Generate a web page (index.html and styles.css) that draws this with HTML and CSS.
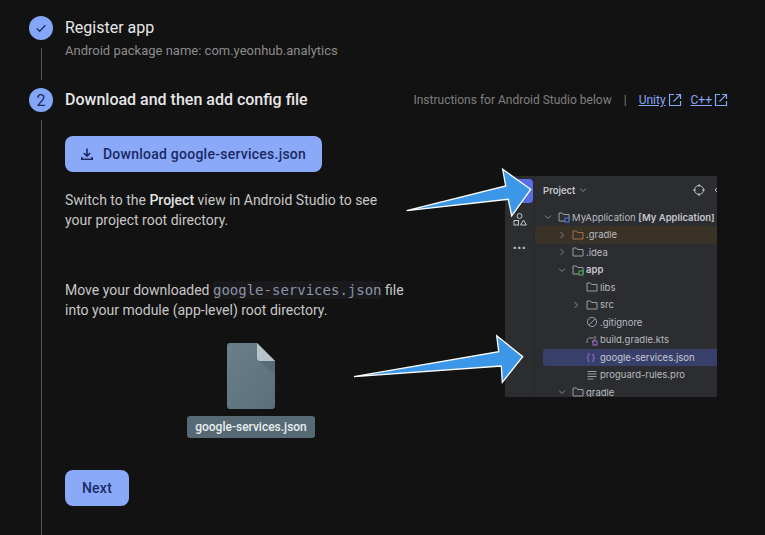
FILE: index.html
```html
<!DOCTYPE html>
<html lang="en">
<head>
<meta charset="utf-8">
<title>Add Firebase to your Android app</title>
<link rel="stylesheet" href="styles.css">
</head>
<body>
<main class="stepper">
  <section class="step step-done">
    <div class="rail">
      <div class="badge">
        <svg width="14" height="14" viewBox="0 0 14 14"><path class="check" d="M2.6 7.4 5.6 10.3 11.4 4.3"/></svg>
      </div>
      <div class="rail-line"></div>
    </div>
    <div class="step-main">
      <h2 class="step-title step-title-plain">Register app</h2>
      <p class="step-sub">Android package name: com.yeonhub.analytics</p>
    </div>
  </section>

  <section class="step step-active">
    <div class="rail">
      <div class="badge badge-num">2</div>
      <div class="rail-line"></div>
    </div>
    <div class="step-main">
      <header class="step-head">
        <h2 class="step-title">Download and then add config file</h2>
        <div class="alt-links">
          <span>Instructions for Android Studio below</span>
          <span class="sep">|</span>
          <a class="ext" href="#">Unity</a>
          <svg class="ext-icon" width="14" height="14" viewBox="0 0 14 14"><path d="M6 1.500H1.500v11h11V8M8 1.500h4.500V6M12.300 1.700 5.500 8.500"/></svg>
          <a class="ext ext-next" href="#">C++</a>
          <svg class="ext-icon" width="14" height="14" viewBox="0 0 14 14"><path d="M6 1.500H1.500v11h11V8M8 1.500h4.500V6M12.300 1.700 5.500 8.500"/></svg>
        </div>
      </header>

      <div class="step-body">
        <div class="instructions">
          <button class="btn btn-download" type="button">
            <svg width="16" height="16" viewBox="0 0 16 16"><path class="dl" d="M8 2.500V10M4.800 7 8 10.200 11.200 7M2.800 11v2.200h10.400V11"/></svg>
            Download google-services.json
          </button>
          <p class="para para-first">Switch to the <b>Project</b> view in Android Studio to see your project root directory.</p>
          <p class="para para-second">Move your downloaded <code>google-services.json</code> file into your module (app-level) root directory.</p>
          <div class="file">
            <svg width="48" height="66" viewBox="0 0 48 66">
              <defs>
                <linearGradient id="fileFill" x1="0" y1="0" x2="1" y2="1">
                  <stop offset="0" stop-color="#6a7f8b"/>
                  <stop offset="1" stop-color="#596f7c"/>
                </linearGradient>
              </defs>
              <path fill="url(#fileFill)" d="M3 0H30L48 18V63a3 3 0 0 1-3 3H3a3 3 0 0 1-3-3V3a3 3 0 0 1 3-3Z"/>
              <path fill="#566b77" d="M32 18H48V32Z"/>
              <path fill="#b8c4cc" d="M30 0 48 18H33a3 3 0 0 1-3-3Z"/>
            </svg>
            <div class="file-name">google-services.json</div>
          </div>
          <button class="btn btn-next" type="button">Next</button>
        </div>

        <figure class="ide">
          <div class="ide-rail">
            <div class="ide-app"></div>
            <svg class="ide-shapes" width="14" height="14" viewBox="0 0 14 14"><circle cx="6.500" cy="4" r="2.500"/><rect x="1" y="8.500" width="4.500" height="4.500"/><path d="M10.500 8 13.400 13H7.600Z"/></svg>
            <div class="ide-dots">•••</div>
          </div>
          <div class="ide-panel">
            <div class="ide-head">
              <span class="ide-head-title">Project</span>
              <svg class="chev" width="8" height="8" viewBox="0 0 8 8"><path d="M1 2.500 4 5.500 7 2.500"/></svg>
              <svg class="ide-target" width="12" height="12" viewBox="0 0 12 12"><circle cx="6" cy="6" r="4.500"/><path d="M6 0v3M6 9v3M0 6h3M9 6h3"/></svg>
              <svg class="chev chev-bright" width="8" height="8" viewBox="0 0 8 8"><path d="M6 1 3 4 6 7"/></svg>
            </div>
            <ul class="tree">
              <li class="row d0"><svg class="chev" width="10" height="10" viewBox="0 0 10 10"><path d="M2 3.500 5 6.500 8 3.500"/></svg><svg class="folder" width="12" height="12" viewBox="0 0 12 12"><path d="M1 2h3.500l1 1.500H11V10H1Z"/><rect class="mod-blue" x="7" y="7" width="4" height="4"/></svg><span>MyApplication <b>[My Application]</b></span></li>
              <li class="row d1 row-ignored"><svg class="chev" width="10" height="10" viewBox="0 0 10 10"><path d="M3.500 2 6.500 5 3.500 8"/></svg><svg class="folder folder-orange" width="12" height="12" viewBox="0 0 12 12"><path d="M1 2h3.500l1 1.500H11V10H1Z"/></svg><span>.gradle</span></li>
              <li class="row d1"><svg class="chev" width="10" height="10" viewBox="0 0 10 10"><path d="M3.500 2 6.500 5 3.500 8"/></svg><svg class="folder" width="12" height="12" viewBox="0 0 12 12"><path d="M1 2h3.500l1 1.500H11V10H1Z"/></svg><span>.idea</span></li>
              <li class="row d1"><svg class="chev" width="10" height="10" viewBox="0 0 10 10"><path d="M2 3.500 5 6.500 8 3.500"/></svg><svg class="folder" width="12" height="12" viewBox="0 0 12 12"><path d="M1 2h3.500l1 1.500H11V10H1Z"/><rect class="mod-green" x="7" y="7" width="4" height="4"/></svg><b>app</b></li>
              <li class="row d2"><span class="chev-gap"></span><svg class="folder" width="12" height="12" viewBox="0 0 12 12"><path d="M1 2h3.500l1 1.500H11V10H1Z"/></svg><span>libs</span></li>
              <li class="row d2"><svg class="chev" width="10" height="10" viewBox="0 0 10 10"><path d="M3.500 2 6.500 5 3.500 8"/></svg><svg class="folder" width="12" height="12" viewBox="0 0 12 12"><path d="M1 2h3.500l1 1.500H11V10H1Z"/></svg><span>src</span></li>
              <li class="row d2"><span class="chev-gap"></span><svg class="folder" width="12" height="12" viewBox="0 0 12 12"><circle cx="6" cy="6" r="4.600"/><path d="M2.800 9.200 9.200 2.800"/></svg><span>.gitignore</span></li>
              <li class="row d2"><span class="chev-gap"></span><svg class="folder" width="12" height="12" viewBox="0 0 12 12"><path d="M1 9V6.500C1 4.500 3 3.500 5 4c1.500.4 3 0 4-1.500 1 .8 1 2 0 3L7 7v2"/><rect class="mod-purple" x="7" y="7" width="4" height="4"/></svg><span>build.gradle.kts</span></li>
              <li class="row row-selected"><span class="chev-gap"></span><span class="json-icon">{}</span><span>google-services.json</span></li>
              <li class="row d2"><span class="chev-gap"></span><svg class="folder" width="12" height="12" viewBox="0 0 12 12"><path d="M1.500 2.500h9M1.500 5h9M1.500 7.500h9M1.500 10h6"/></svg><span>proguard-rules.pro</span></li>
              <li class="row d1"><svg class="chev" width="10" height="10" viewBox="0 0 10 10"><path d="M2 3.500 5 6.500 8 3.500"/></svg><svg class="folder" width="12" height="12" viewBox="0 0 12 12"><path d="M1 2h3.500l1 1.500H11V10H1Z"/></svg><span>gradle</span></li>
            </ul>
          </div>
        </figure>
      </div>
    </div>
  </section>
</main>

<svg class="arrows" width="765" height="535" viewBox="0 0 765 535">
  <path d="M406.700 210.700 505.700 186 502.700 169.300 530.700 189.300 511.700 216 508.300 199.300Z"/>
  <path d="M354 376.700 498.700 351.700 496.700 335.700 522.700 356.700 502.300 382.300 501.300 366Z"/>
</svg>
</body>
</html>
```

FILE: styles.css
```css
* { box-sizing: border-box; }

html, body {
  margin: 0;
  height: 535px;
  overflow: hidden;
  background: #121212;
}

body {
  position: relative;
  font-family: Roboto, "Liberation Sans", sans-serif;
  color: #e3e3e3;
}

.stepper {
  padding: 16px 37px 0 29px;
  display: flex;
  flex-direction: column;
}

.step {
  display: flex;
  gap: 12px;
}

.step-done { height: 72px; }
.step-active { height: 447px; }

.rail {
  flex: 0 0 24px;
  display: flex;
  flex-direction: column;
  align-items: center;
}

.badge {
  width: 24px;
  height: 24px;
  border-radius: 50%;
  background: #84a6f8;
  color: #1c2a63;
  display: flex;
  align-items: center;
  justify-content: center;
  flex: none;
}

.badge-num { font-size: 16px; }

.check {
  fill: none;
  stroke: #1c2a63;
  stroke-width: 1.300;
}

.rail-line {
  flex: 1;
  width: 1px;
  margin: 8px 0;
  background: #55565a;
}

.step-active .rail-line { margin-bottom: 0; }

.step-main {
  flex: 1;
  min-width: 0;
}

.step-title {
  margin: 0;
  font-size: 16px;
  line-height: 24px;
  font-weight: 500;
  color: #e6e6e6;
}

.step-title-plain {
  font-weight: 400;
}

.step-sub {
  margin: 2px 0 0;
  font-size: 13px;
  line-height: 18px;
  color: #8c8c8c;
}

.step-head {
  display: flex;
  justify-content: space-between;
  align-items: center;
  height: 24px;
}

.alt-links {
  display: flex;
  align-items: center;
  font-size: 12px;
  color: #7f7f7f;
}

.sep { margin: 0 12px; }

.ext {
  color: #84a6f8;
  text-decoration: underline;
}

.ext-next { margin-left: 9px; }

.ext-icon {
  margin-left: 2px;
  fill: none;
  stroke: #84a6f8;
  stroke-width: 1.200;
}

.step-body {
  display: flex;
  margin-top: 24px;
}

.instructions {
  flex: 0 0 440px;
  display: flex;
  flex-direction: column;
  align-items: flex-start;
}

.btn {
  border: 0;
  border-radius: 8px;
  height: 36px;
  background: #8aa9f9;
  color: #1c2a63;
  font-family: inherit;
  font-size: 14px;
  font-weight: 500;
  letter-spacing: .25px;
  display: flex;
  align-items: center;
  justify-content: center;
}

.btn-download {
  width: 257px;
  gap: 8px;
  padding: 0 8px 0 6px;
}

.dl {
  fill: none;
  stroke: #1c2a63;
  stroke-width: 1.600;
}

.btn-next {
  width: 64px;
  margin-top: 32px;
}

.para {
  margin: 0;
  width: 345px;
  font-size: 14px;
  line-height: 20px;
  color: #c7c7c7;
}

.para b {
  font-weight: 500;
  color: #e3e3e3;
}

.para-first { margin-top: 18px; width: 320px; }
.para-second { margin-top: 50px; }

.para code {
  font-family: "DejaVu Sans Mono", monospace;
  font-size: 14px;
  line-height: 1;
  padding: 1px 0;
  border-radius: 3px;
  background: #1a1a1c;
  color: #8b93a8;
}

.file {
  width: 372px;
  margin-top: 23px;
  display: flex;
  flex-direction: column;
  align-items: center;
  gap: 7px;
}

.file svg { display: block; }

.file-name {
  width: 128px;
  height: 22px;
  border-radius: 3px;
  background: #566a76;
  color: #e8ecee;
  font-size: 12px;
  font-weight: 500;
  line-height: 22px;
  text-align: center;
}

.ide {
  margin: 40px 0 0;
  width: 212px;
  height: 221px;
  flex: none;
  display: flex;
  overflow: hidden;
  background: #2b2d30;
  font-family: Inter, "Liberation Sans", sans-serif;
  font-size: 9.500px;
  color: #b9bbc0;
}

.ide-rail {
  flex: 0 0 30px;
  border-right: 1px solid #26282b;
  display: flex;
  flex-direction: column;
  align-items: center;
  padding-top: 3px;
}

.ide-app {
  width: 24px;
  height: 24px;
  margin-left: 2px;
  border-radius: 4px;
  background: #5a6ce6;
}

.ide-shapes {
  margin-top: 9px;
  fill: none;
  stroke: #c4c6cb;
  stroke-width: 1;
}

.ide-dots {
  margin-top: 17px;
  font-size: 7px;
  line-height: 10px;
  letter-spacing: .5px;
  color: #c4c6cb;
}

.ide-panel {
  flex: 1;
  min-width: 0;
}

.ide-head {
  height: 28px;
  padding-left: 8px;
  display: flex;
  align-items: center;
  gap: 4px;
  font-weight: 600;
  color: #c6c8cc;
}

.ide-target {
  flex: none;
  margin-left: 102px;
  fill: none;
  stroke: #b9bbc0;
  stroke-width: 1;
}

.chev {
  flex: none;
  fill: none;
  stroke: #85888e;
  stroke-width: 1;
}

.ide-target + .chev-bright {
  margin-left: 3px;
  stroke: #b9bbc0;
}

.tree {
  list-style: none;
  margin: 4.500px 0 0;
  padding: 0;
}

.row {
  height: 17.500px;
  display: flex;
  align-items: center;
  white-space: nowrap;
}

.row b { font-weight: 600; color: #c6c8cc; }

.row .chev, .chev-gap {
  flex: 0 0 10px;
  margin-right: 5px;
}

.row .folder {
  flex: 0 0 12px;
  margin-right: 2px;
  fill: none;
  stroke: #9b9da3;
  stroke-width: 1;
}

.d0 { padding-left: 8px; }
.d1 { padding-left: 22px; }
.d2 { padding-left: 36px; }

.row .folder-orange { stroke: #a56f45; }

.row-ignored { background: #3a3127; }

.mod-blue { stroke: #4a7de0; fill: #2b2d30; }
.mod-green { stroke: #4db35e; fill: #2b2d30; }
.mod-purple { stroke: #a06fd8; fill: #2b2d30; }

.row-selected {
  margin-left: 8px;
  padding-left: 28px;
  background: #393f6b;
  border-radius: 3px 0 0 3px;
  color: #c8cad0;
}

.json-icon {
  flex: 0 0 12px;
  margin-right: 2px;
  font-size: 9.500px;
  letter-spacing: 1.500px;
  color: #a678e0;
}

.arrows {
  position: absolute;
  left: 0;
  top: 0;
  pointer-events: none;
}

.arrows path {
  fill: #3d97e8;
  stroke: #fff;
  stroke-width: 1.300;
}
```
